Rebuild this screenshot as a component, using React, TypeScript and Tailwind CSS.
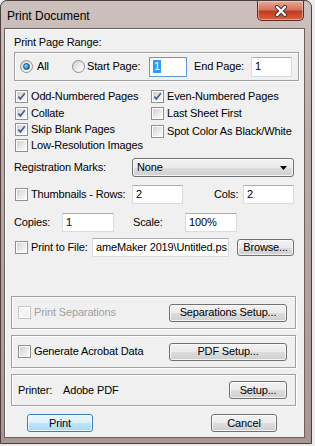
import React from 'react';

const Check = ({ checked = false, disabled = false }: { checked?: boolean; disabled?: boolean }) => (
  <div
    className={`w-[13px] h-[13px] shrink-0 border p-[1px] bg-white ${
      disabled ? 'border-[#c4c4c4]' : 'border-[#8e8f8f]'
    }`}
  >
    <div
      className={`w-full h-full relative ${
        disabled
          ? 'bg-[#f4f4f4]'
          : 'bg-[linear-gradient(135deg,#cfcfcf_0%,#e8e8e8_50%,#fbfbfb_100%)]'
      }`}
    >
      {checked && (
        <svg width="9" height="9" viewBox="0 0 9 9" className="absolute left-0 top-0">
          <path d="M1.3 4.6 L3.4 6.9 L7.8 1.3" fill="none" stroke="#4a5f97" strokeWidth="1.7" />
        </svg>
      )}
    </div>
  </div>
);

const Radio = ({ checked = false }: { checked?: boolean }) => (
  <div className="w-[13px] h-[13px] shrink-0 rounded-full border border-[#8e8f8f] bg-[linear-gradient(135deg,#cfcfcf_0%,#f0f0f0_60%,#ffffff_100%)] flex items-center justify-center">
    {checked && (
      <div className="w-[7px] h-[7px] rounded-full border border-[#1c5180] bg-[radial-gradient(circle_at_35%_35%,#a6dcff_0%,#2a8ad4_55%,#0d4d8a_100%)]" />
    )}
  </div>
);

const Input = ({
  value,
  w,
  focused = false,
}: {
  value: string;
  w: string;
  focused?: boolean;
}) => (
  <div
    className={`${w} h-full shrink-0 bg-white border flex items-center pl-[3px] overflow-hidden whitespace-nowrap ${
      focused
        ? 'border-[#5a9ad6]'
        : 'border-[#d8dbe2] border-t-[#abadb3]'
    }`}
  >
    {focused ? <span className="bg-[#3399ff] text-white leading-[13px] px-[1px]">{value}</span> : value}
  </div>
);

const Btn = ({ label, w, primary = false }: { label: string; w: string; primary?: boolean }) => (
  <div
    className={`${w} h-full shrink-0 rounded-[3px] border flex items-center justify-center shadow-[inset_0_0_0_1px_rgba(255,255,255,0.75)] ${
      primary
        ? 'border-[#3c7fb1] bg-[linear-gradient(180deg,#eaf6fd_0%,#d9f0fc_50%,#bee6fd_51%,#a7d9f5_100%)]'
        : 'border-[#707070] bg-[linear-gradient(180deg,#f2f2f2_0%,#ebebeb_50%,#dddddd_51%,#cfcfcf_100%)]'
    }`}
  >
    {label}
  </div>
);

const Group = ({ children, h }: { children: React.ReactNode; h: string }) => (
  <div
    className={`-ml-[3px] w-[285px] ${h} border border-[#a0a0a0] shadow-[inset_1px_1px_0_#ffffff,1px_1px_0_#ffffff] flex items-center pl-[6px] pr-[8px]`}
  >
    {children}
  </div>
);

export default function App() {
  return (
    <div className="w-[315px] h-[446px] bg-[#ececec] font-['Liberation_Sans',Arial,sans-serif] text-black">
      <div className="w-[312px] h-[444px] flex flex-col rounded-t-[7px] border border-[#4b3e3d] bg-[linear-gradient(180deg,#cdc1be_0%,#bcaca9_30%,#a89694_100%)]">
        {/* title bar */}
        <div className="h-[27px] flex items-start justify-between shrink-0">
          <span className="pl-[6px] pt-[8px] text-[12px] leading-[14px]">Print Document</span>
          <div className="mr-[7px] w-[47px] h-[20px] rounded-b-[5px] border border-t-0 border-[#5b2b22] bg-[linear-gradient(180deg,#e8a999_0%,#d47560_45%,#c23c1f_55%,#d6613f_100%)] shadow-[inset_0_0_0_1px_rgba(255,220,210,0.5)] flex items-center justify-center">
            <svg width="14" height="12" viewBox="0 0 14 12">
              <path d="M3 2 L11 10 M11 2 L3 10" stroke="#4a3a38" strokeWidth="4.2" strokeLinecap="round" />
              <path d="M3 2 L11 10 M11 2 L3 10" stroke="#ffffff" strokeWidth="2.2" strokeLinecap="round" />
            </svg>
          </div>
        </div>

        {/* client */}
        <div className="ml-[3px] w-[301px] flex-1 mb-[5px] border border-[#6a5f5d] bg-[#f0f0f0] shadow-[inset_1px_1px_0_#ffffff] text-[11px] tracking-[-0.15px] leading-[13px] pl-[9px] pr-[5px] flex flex-col">
          <div className="mt-[7px]">Print Page Range:</div>

          <div className="mt-[3px] h-[29px] border border-[#a0a0a0] shadow-[inset_1px_1px_0_#ffffff,1px_1px_0_#ffffff] flex items-center pl-[5px]">
            <div className="w-[52px] flex items-center">
              <Radio checked />
              <span className="ml-[4px]">All</span>
            </div>
            <Radio />
            <span className="ml-[2px] w-[62px]">Start Page:</span>
            <div className="h-[20px] flex">
              <Input value="1" w="w-[38px]" focused />
            </div>
            <span className="ml-[7px] w-[57px]">End Page:</span>
            <div className="h-[20px] flex">
              <Input value="1" w="w-[41px]" />
            </div>
          </div>

          <div className="mt-[7px] flex">
            <div className="ml-[1px] w-[136px] flex flex-col">
              <div className="h-[17px] flex items-center"><Check checked /><span className="ml-[3px]">Odd-Numbered Pages</span></div>
              <div className="h-[16px] flex items-center"><Check checked /><span className="ml-[3px]">Collate</span></div>
              <div className="h-[16px] flex items-center"><Check checked /><span className="ml-[3px]">Skip Blank Pages</span></div>
              <div className="h-[16px] flex items-center"><Check /><span className="ml-[3px]">Low-Resolution Images</span></div>
            </div>
            <div className="flex flex-col">
              <div className="h-[17px] flex items-center"><Check checked /><span className="ml-[3px]">Even-Numbered Pages</span></div>
              <div className="h-[17px] flex items-center"><Check /><span className="ml-[3px]">Last Sheet First</span></div>
              <div className="h-[18px] flex items-center"><Check /><span className="ml-[3px]">Spot Color As Black/White</span></div>
            </div>
          </div>

          <div className="mt-[5px] h-[19px] flex items-center">
            <span className="w-[118px]">Registration Marks:</span>
            <div className="w-[162px] h-full rounded-[3px] border border-[#707070] bg-[linear-gradient(180deg,#f2f2f2_0%,#ebebeb_50%,#dddddd_51%,#cfcfcf_100%)] shadow-[inset_0_0_0_1px_rgba(255,255,255,0.75)] flex items-center justify-between pl-[4px] pr-[6px]">
              <span>None</span>
              <svg width="7" height="4" viewBox="0 0 7 4">
                <path d="M0 0 H7 L3.5 4 Z" fill="#000000" />
              </svg>
            </div>
          </div>

          <div className="mt-[8px] h-[19px] flex items-center">
            <div className="ml-[1px]"><Check /></div>
            <span className="ml-[3px] w-[101px]">Thumbnails - Rows:</span>
            <Input value="2" w="w-[51px]" />
            <span className="ml-[31px] w-[29px]">Cols:</span>
            <Input value="2" w="w-[51px]" />
          </div>

          <div className="mt-[9px] h-[19px] flex items-center">
            <span className="w-[48px]">Copies:</span>
            <Input value="1" w="w-[52px]" />
            <span className="ml-[19px] w-[52px]">Scale:</span>
            <Input value="100%" w="w-[52px]" />
          </div>

          <div className="mt-[6px] h-[19px] flex items-center">
            <div className="ml-[1px]"><Check /></div>
            <span className="ml-[3px] w-[61px]">Print to File:</span>
            <Input value="ameMaker 2019\Untitled.ps" w="w-[137px]" />
            <div className="ml-[8px] h-[17px] flex">
              <Btn label="Browse..." w="w-[57px]" />
            </div>
          </div>

          <div className="mt-[39px]">
            <Group h="h-[33px]">
              <Check disabled />
              <span className="ml-[3px] text-[#a0a0a0]">Print Separations</span>
              <div className="ml-auto h-[18px] flex">
                <Btn label="Separations Setup..." w="w-[118px]" />
              </div>
            </Group>
          </div>

          <div className="mt-[6px]">
            <Group h="h-[33px]">
              <Check />
              <span className="ml-[3px]">Generate Acrobat Data</span>
              <div className="ml-auto h-[18px] flex">
                <Btn label="PDF Setup..." w="w-[118px]" />
              </div>
            </Group>
          </div>

          <div className="mt-[6px]">
            <Group h="h-[32px]">
              <span className="w-[45px]">Printer:</span>
              <span>Adobe PDF</span>
              <div className="ml-auto h-[18px] flex">
                <Btn label="Setup..." w="w-[58px]" />
              </div>
            </Group>
          </div>

          <div className="mt-[8px] h-[18px] flex justify-between pl-[13px] pr-[22px]">
            <Btn label="Print" w="w-[66px]" primary />
            <Btn label="Cancel" w="w-[66px]" />
          </div>
        </div>
      </div>
    </div>
  );
}
